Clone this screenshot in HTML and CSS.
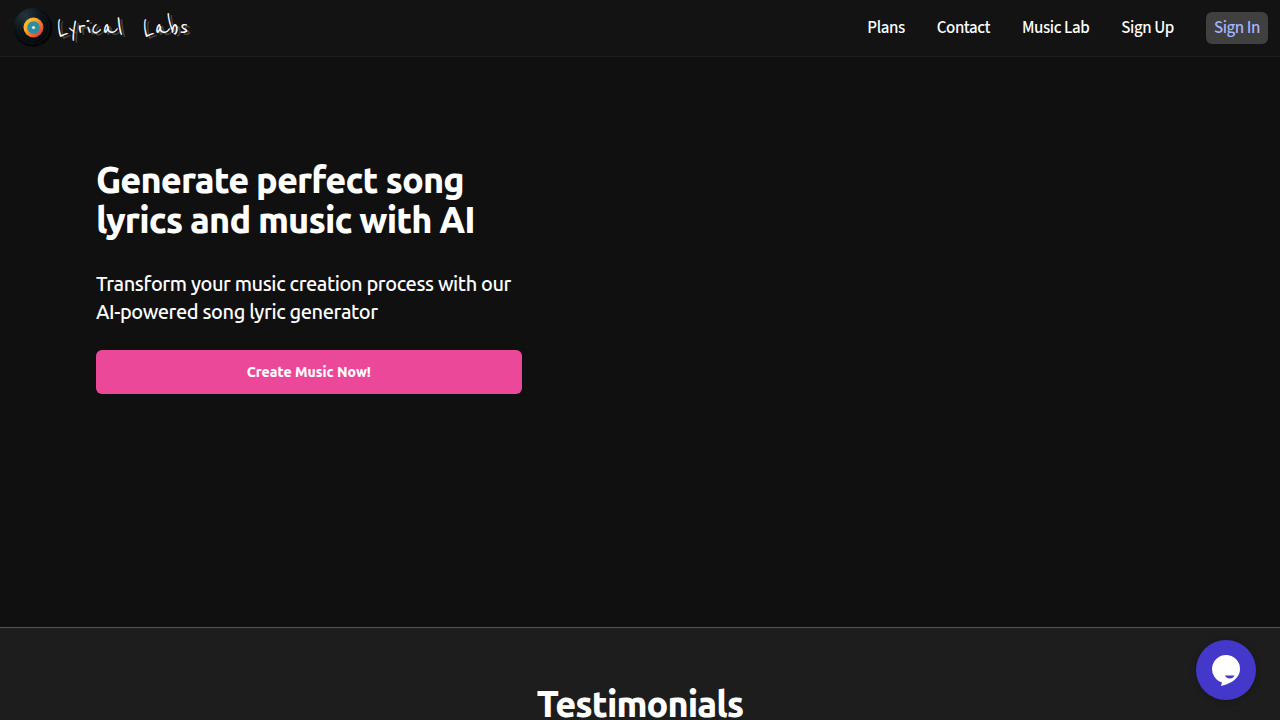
FILE: index.html
```html
<!DOCTYPE html>
<html lang="en">
  <head>
    <meta charset="utf-8">
    <meta name="viewport" content="width=device-width, initial-scale=1">
    <title>Lyrical Labs</title>
    <link rel="stylesheet" href="styles.css">
  </head>
  <body>
    <header class="header">
      <a class="brand" href="#">
        <svg class="brand-icon" viewBox="0 0 40 40" aria-hidden="true">
          <defs>
            <radialGradient id="vinyl" cx="30%" cy="20%" r="80%">
              <stop offset="0" stop-color="#26383f"/>
              <stop offset="0.5" stop-color="#0b1419"/>
              <stop offset="1" stop-color="#030506"/>
            </radialGradient>
            <linearGradient id="label" x1="0" y1="0" x2="1" y2="1">
              <stop offset="0.3" stop-color="#f9b52a"/>
              <stop offset="0.65" stop-color="#f0692c"/>
              <stop offset="1" stop-color="#b92352"/>
            </linearGradient>
          </defs>
          <circle cx="20" cy="19.5" r="19.5" fill="url(#vinyl)"/>
          <circle cx="20" cy="19.5" r="16" fill="none" stroke="#1b282e" stroke-width="0.5"/>
          <circle cx="20" cy="19.5" r="13" fill="none" stroke="#142026" stroke-width="0.5"/>
          <circle cx="20.5" cy="19.5" r="10" fill="url(#label)"/>
          <circle cx="20.5" cy="19.5" r="6.3" fill="#2a8fa3"/>
          <circle cx="20.5" cy="19.5" r="1.6" fill="#e8eee4"/>
        </svg>
        <span class="brand-name">Lyrical <span>Labs</span></span>
      </a>
      <nav class="nav">
        <a class="nav-link" href="#">Plans</a>
        <a class="nav-link" href="#">Contact</a>
        <a class="nav-link" href="#">Music Lab</a>
        <a class="nav-link" href="#">Sign Up</a>
        <a class="nav-link nav-signin" href="#">Sign In</a>
      </nav>
    </header>

    <main>
      <section class="hero">
        <div class="hero-content">
          <h1 class="title">Generate perfect song lyrics and music with AI</h1>
          <p class="hero-text">Transform your music creation process with our AI-powered song lyric generator</p>
          <button class="btn" type="button">Create Music Now!</button>
        </div>
      </section>

      <section class="testimonials">
        <h2 class="title">Testimonials</h2>
      </section>
    </main>

    <button class="chat-btn" type="button" aria-label="Open chat">
      <svg class="chat-icon" viewBox="0 0 28 31" aria-hidden="true">
        <path fill="#fff" d="M14 0a14 14 0 0 1 14 14c0 6-4 10.500-8.500 13-3.500 2-7 3-10.500 4l1-3.600A14 14 0 0 1 14 0z"/>
        <path fill="#4338ca" d="M13 20.500h9.500c-.8 2-2.500 3-4.700 3s-4-1-4.800-3z"/>
      </svg>
    </button>
  </body>
</html>
```

FILE: styles.css
```css
* {
  box-sizing: border-box;
}
body {
  margin: 0;
  font-family: Ubuntu, "Noto Sans", sans-serif;
  background-color: #101010;
  color: white;
  overflow-x: hidden;
}
.header {
  display: flex;
  justify-content: space-between;
  align-items: center;
  padding: 8px 12px;
  background-color: #131313;
  border-bottom: 1px solid #1f1f1f;
}
.brand {
  display: flex;
  align-items: center;
  gap: 4px;
  padding-left: 1px;
  color: white;
  text-decoration: none;
}
.brand-icon {
  width: 40px;
  height: 40px;
}
.brand-name {
  display: flex;
  gap: 20px;
  font-family: "Reenie Beanie", Caveat, Lato, cursive;
  font-size: 30px;
  font-weight: 400;
  line-height: 36px;
  text-shadow: 3px 2px 0 #444;
}
.nav {
  display: flex;
  align-items: center;
  gap: 32px;
}
.nav-link {
  font-family: "Source Sans Pro", "Source Sans 3", "Noto Sans CJK JP", sans-serif;
  font-size: 17px;
  font-weight: 500;
  line-height: 24px;
  letter-spacing: -0.025em;
  color: white;
  text-decoration: none;
}
.nav-signin {
  padding: 4px 8px;
  border-radius: 6px;
  background-color: #404040;
  color: #a5b4fc;
}
.hero {
  display: grid;
  grid-template-columns: 2fr 3fr;
  gap: 24px;
  min-height: 570px;
  padding: 103px 96px;
}
.title {
  margin: 0;
  font-size: 36px;
  font-weight: 800;
  line-height: 40px;
  letter-spacing: -0.025em;
}
.hero-text {
  margin: 30px 0 24px;
  font-size: 20px;
  font-weight: 500;
  line-height: 28px;
  letter-spacing: -0.02em;
}
.btn {
  width: 100%;
  padding: 12px 20px;
  border: none;
  border-radius: 6px;
  background-color: #ec4899;
  color: white;
  font-family: inherit;
  font-size: 14px;
  font-weight: 800;
  line-height: 20px;
  cursor: pointer;
}
.btn:hover {
  background-color: #db2777;
}
.testimonials {
  padding: 56px 24px;
  border-top: 1px solid #525252;
  background-color: #1d1d1d;
  text-align: center;
}
.chat-btn {
  position: fixed;
  right: 24px;
  bottom: 20px;
  display: flex;
  justify-content: center;
  align-items: center;
  width: 60px;
  height: 60px;
  padding: 0;
  border: none;
  border-radius: 50%;
  background-color: #4338ca;
  box-shadow: 0 1px 6px rgba(0, 0, 0, 0.2);
  cursor: pointer;
}
.chat-icon {
  width: 28px;
  height: 31px;
}
```
